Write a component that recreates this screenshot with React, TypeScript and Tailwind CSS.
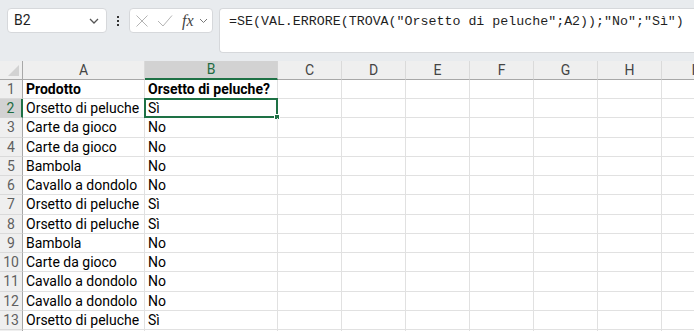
import React from "react";

const cols = [
  { id: "A", w: "w-[122px]" },
  { id: "B", w: "w-[133px]" },
  { id: "C", w: "w-[64px]" },
  { id: "D", w: "w-[64px]" },
  { id: "E", w: "w-[64px]" },
  { id: "F", w: "w-[64px]" },
  { id: "G", w: "w-[64px]" },
  { id: "H", w: "w-[64px]" },
  { id: "I", w: "w-[64px]" },
];

const data: [string, string][] = [
  ["Prodotto", "Orsetto di peluche?"],
  ["Orsetto di peluche", "Sì"],
  ["Carte da gioco", "No"],
  ["Carte da gioco", "No"],
  ["Bambola", "No"],
  ["Cavallo a dondolo", "No"],
  ["Orsetto di peluche", "Sì"],
  ["Orsetto di peluche", "Sì"],
  ["Bambola", "No"],
  ["Carte da gioco", "No"],
  ["Cavallo a dondolo", "No"],
  ["Cavallo a dondolo", "No"],
  ["Orsetto di peluche", "Sì"],
  ["", ""],
];

const cellFont = { fontFamily: "'Liberation Sans Narrow', Roboto, sans-serif" };

function Toolbar() {
  return (
    <div className="flex h-[61px] bg-[#e8ebee] pt-[8px] pl-[7px]">
      <div className="flex h-[25px] w-[100px] items-center justify-between rounded-[4px] border border-[#d6d8db] bg-white pl-[6px] pr-[6px]">
        <span className="text-[14px] text-[#1f1f1f]" style={{ fontFamily: "Roboto, sans-serif" }}>B2</span>
        <svg width="12" height="8" viewBox="0 0 12 8" fill="none" stroke="#555" strokeWidth="1.3">
          <path d="M2 2l4 4 4-4" />
        </svg>
      </div>
      <div className="flex h-[25px] w-[22px] flex-col items-center justify-center gap-[2px]">
        <span className="h-[2px] w-[2px] bg-[#333]" />
        <span className="h-[2px] w-[2px] bg-[#333]" />
        <span className="h-[2px] w-[2px] bg-[#333]" />
      </div>
      <div className="flex h-[25px] w-[84px] items-center rounded-[4px] border border-[#d6d8db] bg-white pl-[5px]">
        <svg width="14" height="14" viewBox="0 0 14 14" fill="none" stroke="#b4b4b4" strokeWidth="1">
          <path d="M1.5 1.5l11 11M12.5 1.5l-11 11" />
        </svg>
        <svg className="ml-[8px]" width="16" height="14" viewBox="0 0 16 14" fill="none" stroke="#b4b4b4" strokeWidth="1">
          <path d="M1 7l5 5L15 1.5" />
        </svg>
        <span
          className="ml-[9px] text-[16px] italic leading-none text-[#444]"
          style={{ fontFamily: "'Liberation Serif', serif" }}
        >
          fx
        </span>
        <svg className="ml-[5px]" width="9" height="6" viewBox="0 0 9 6" fill="none" stroke="#777" strokeWidth="1">
          <path d="M1 1l3.5 3.5L8 1" />
        </svg>
      </div>
      <div className="ml-[6px] flex h-[45px] flex-1 rounded-l-[4px] border border-r-0 border-[#d6d8db] bg-white pl-[9px] pt-[3px]">
        <span
          className="whitespace-pre text-[13.3px] text-[#1f1f1f]"
          style={{ fontFamily: "'Liberation Mono', monospace" }}
        >
          =SE(VAL.ERRORE(TROVA("Orsetto di peluche";A2));"No";"Sì")
        </span>
      </div>
    </div>
  );
}

function HeaderRow() {
  return (
    <div className="flex h-[19px]">
      <div className="relative w-[23px] shrink-0 border-r border-b border-[#a8a8a8] bg-[#efefef]">
        <svg className="absolute right-[3px] bottom-[3px]" width="11" height="11" viewBox="0 0 11 11">
          <path d="M11 0V11H0z" fill="#d2d2d2" />
        </svg>
      </div>
      {cols.map((c) => (
        <div
          key={c.id}
          className={`${c.w} flex shrink-0 items-center justify-center border-r text-[14px] ${
            c.id === "B"
              ? "border-b-2 border-b-[#1e7145] border-r-[#d4d4d4] bg-[#d2d2d2] text-[#1e6b41]"
              : "border-b border-b-[#a8a8a8] border-r-[#dadada] bg-[#efefef] text-[#444]"
          }`}
          style={{ fontFamily: "Roboto, sans-serif" }}
        >
          {c.id}
        </div>
      ))}
    </div>
  );
}

function Row({ n, a, b }: { n: number; a: string; b: string }) {
  const sel = n === 2;
  const bold = n === 1;
  const h = n % 4 === 3 ? "h-[20px]" : "h-[19px]";
  return (
    <div className={`flex ${h}`}>
      <div
        className={`flex w-[23px] shrink-0 items-center justify-center border-b text-[14px] ${
          sel
            ? "border-r-2 border-r-[#1e7145] border-b-[#d4d4d4] bg-[#d2d2d2] text-[#1e6b41]"
            : "border-r border-r-[#a8a8a8] border-b-[#dadada] bg-[#efefef] text-[#5f5f5f]"
        }`}
        style={{ fontFamily: "Roboto, sans-serif" }}
      >
        {n < 14 ? n : ""}
      </div>
      <div
        className={`flex w-[122px] shrink-0 items-center overflow-hidden whitespace-nowrap border-r border-b border-[#e1e1e1] pl-[3px] text-[14px] text-black ${
          bold ? "font-bold" : ""
        }`}
        style={cellFont}
      >
        {a}
      </div>
      <div
        className={`relative flex w-[133px] shrink-0 items-center whitespace-nowrap border-r border-b border-[#e1e1e1] pl-[3px] text-[14px] text-black ${
          bold ? "font-bold" : ""
        }`}
        style={cellFont}
      >
        {b}
        {sel && (
          <>
            <div className="absolute -top-[1px] -left-[1px] -right-[1px] -bottom-[1px] border-2 border-[#1e7145]" />
            <div className="absolute -right-[3px] -bottom-[3px] h-[6px] w-[6px] border border-white bg-[#1e7145]" />
          </>
        )}
      </div>
      {cols.slice(2).map((c) => (
        <div key={c.id} className={`${c.w} shrink-0 border-r border-b border-[#e1e1e1]`} />
      ))}
    </div>
  );
}

export default function App() {
  return (
    <div className="h-[331px] w-[694px] overflow-hidden bg-white">
      <Toolbar />
      <HeaderRow />
      {data.map((r, i) => (
        <Row key={i} n={i + 1} a={r[0]} b={r[1]} />
      ))}
    </div>
  );
}
